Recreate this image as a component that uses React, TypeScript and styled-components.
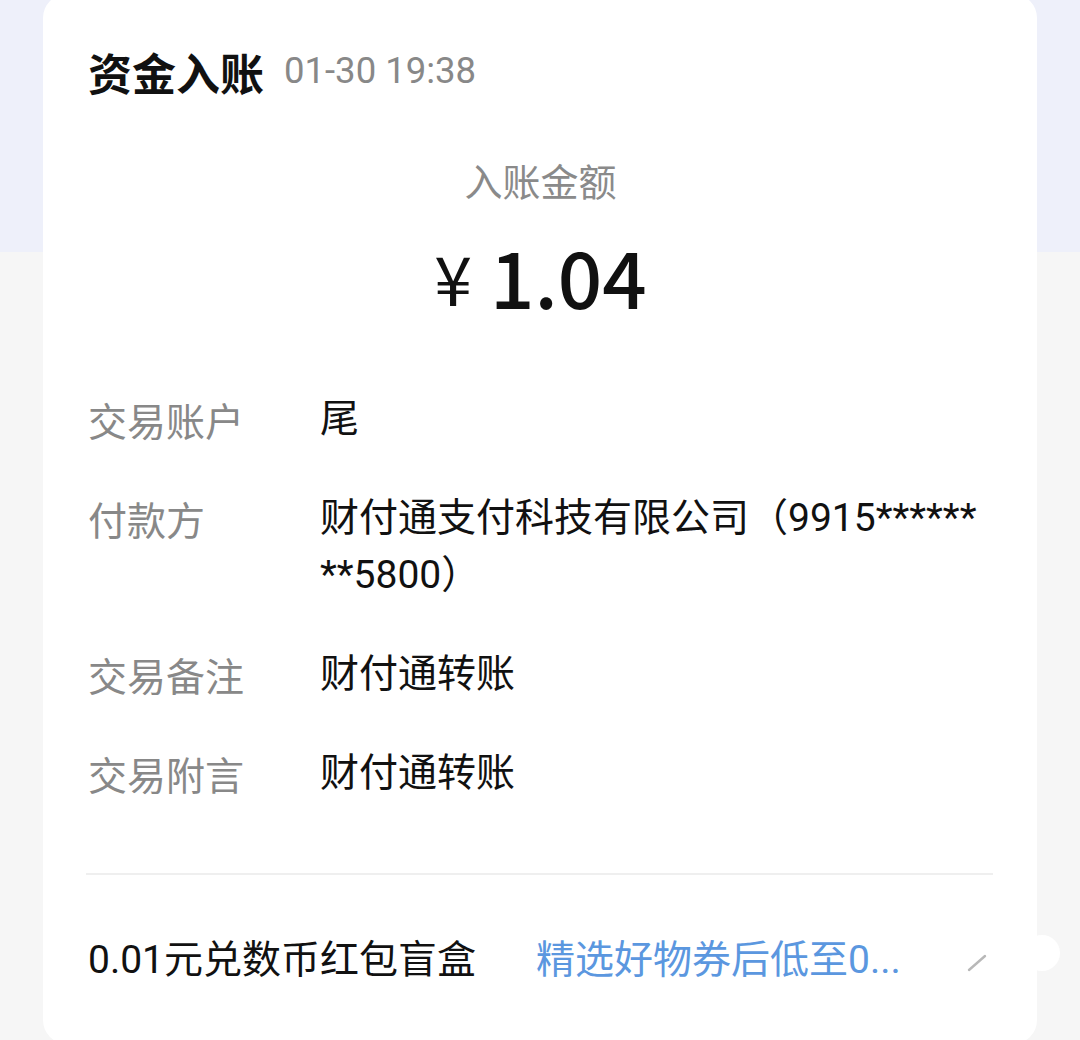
import styled, { createGlobalStyle } from "styled-components";

const GlobalStyle = createGlobalStyle`
  html, body {
    margin: 0;
    padding: 0;
    overflow: hidden;
  }
  body {
    font-family: Roboto, "Noto Sans CJK SC", sans-serif;
    background: #f6f6f6;
  }
`

const rows = [
  { label: "交易账户", value: "尾" },
  { label: "付款方", value: "财付通支付科技有限公司（9915********5800）" },
  { label: "交易备注", value: "财付通转账" },
  { label: "交易附言", value: "财付通转账" },
]

const App = () => {
  return (
    <>
      <GlobalStyle />
      <Page>
        <Card>
          <Header>
            <Title>资金入账</Title>
            <Time>01-30 19:38</Time>
          </Header>
          <AmountLabel>入账金额</AmountLabel>
          <Amount>
            <Yen>¥</Yen>
            <Value>1.04</Value>
          </Amount>
          <Details>
            {rows.map((r) => (
              <DetailRow key={r.label}>
                <Label>{r.label}</Label>
                <Text>{r.value}</Text>
              </DetailRow>
            ))}
          </Details>
          <Divider />
          <Promo>
            <PromoTitle>0.01元兑数币红包盲盒</PromoTitle>
            <PromoLink>精选好物券后低至0...</PromoLink>
            <Arrow width="24" height="24" viewBox="0 0 24 24">
              <path d="M4 20 L20 6" stroke="#b8b8b8" strokeWidth="2.4" strokeLinecap="round" fill="none" />
            </Arrow>
          </Promo>
          <Notch />
        </Card>
      </Page>
    </>
  );
}

const Page = styled.div`
  display: flex;
  flex-direction: column;
  height: 1040px;
  overflow: hidden;
  background: linear-gradient(to bottom, #eef0fa 0, #eef0fa 252px, #f6f6f6 252px);
`

const Card = styled.div`
  position: relative;
  margin: -6px 43px 0;
  height: 1050px;
  flex-shrink: 0;
  box-sizing: border-box;
  padding: 38px 44px 0 45px;
  background: #fff;
  border-radius: 24px;
  display: flex;
  flex-direction: column;
`

const Header = styled.div`
  display: flex;
  align-items: center;
  height: 80px;
  gap: 20px;
`

const Title = styled.span`
  font-family: "Noto Sans CJK SC", sans-serif;
  font-size: 44px;
  font-weight: 700;
  color: #111;
`

const Time = styled.span`
  font-family: Roboto, sans-serif;
  font-size: 36.5px;
  color: #888;
  margin-top: -4px;
`

const AmountLabel = styled.div`
  margin-top: 40px;
  text-align: center;
  font-family: "Noto Sans CJK SC", sans-serif;
  font-size: 38px;
  line-height: 56px;
  color: #8a8a8a;
`

const Amount = styled.div`
  margin-top: 17px;
  height: 100px;
  display: flex;
  justify-content: center;
  align-items: center;
  gap: 18px;
  color: #111;
  font-family: "Noto Sans CJK SC", sans-serif;
`

const Yen = styled.span`
  font-size: 68px;
  font-weight: 400;
  margin-top: 2px;
`

const Value = styled.span`
  font-size: 78px;
  font-weight: 500;
`

const Details = styled.div`
  margin-top: 66px;
  display: flex;
  flex-direction: column;
  gap: 42px;
`

const DetailRow = styled.div`
  display: grid;
  grid-template-columns: 232px 1fr;
  font-size: 39px;
  line-height: 57px;
`

const Label = styled.span`
  color: #888;
  font-family: "Noto Sans CJK SC", sans-serif;
`

const Text = styled.span`
  color: #111;
  word-break: break-all;
  padding-right: 6px;
`

const Divider = styled.div`
  margin-top: 71px;
  height: 2px;
  background: #efefef;
  margin-left: -2px;
`

const Promo = styled.div`
  margin-top: 57px;
  display: flex;
  align-items: center;
  font-size: 39px;
  line-height: 57px;
`

const PromoTitle = styled.span`
  color: #111;
  width: 448px;
  flex-shrink: 0;
`

const PromoLink = styled.span`
  color: #5b97df;
  flex: 1;
`

const Arrow = styled.svg`
  margin-right: 4px;
  margin-top: 2px;
`

const Notch = styled.div`
  position: absolute;
  right: -23px;
  top: 941px;
  width: 36px;
  height: 36px;
  border-radius: 50%;
  background: #fff;
`

export default App;
